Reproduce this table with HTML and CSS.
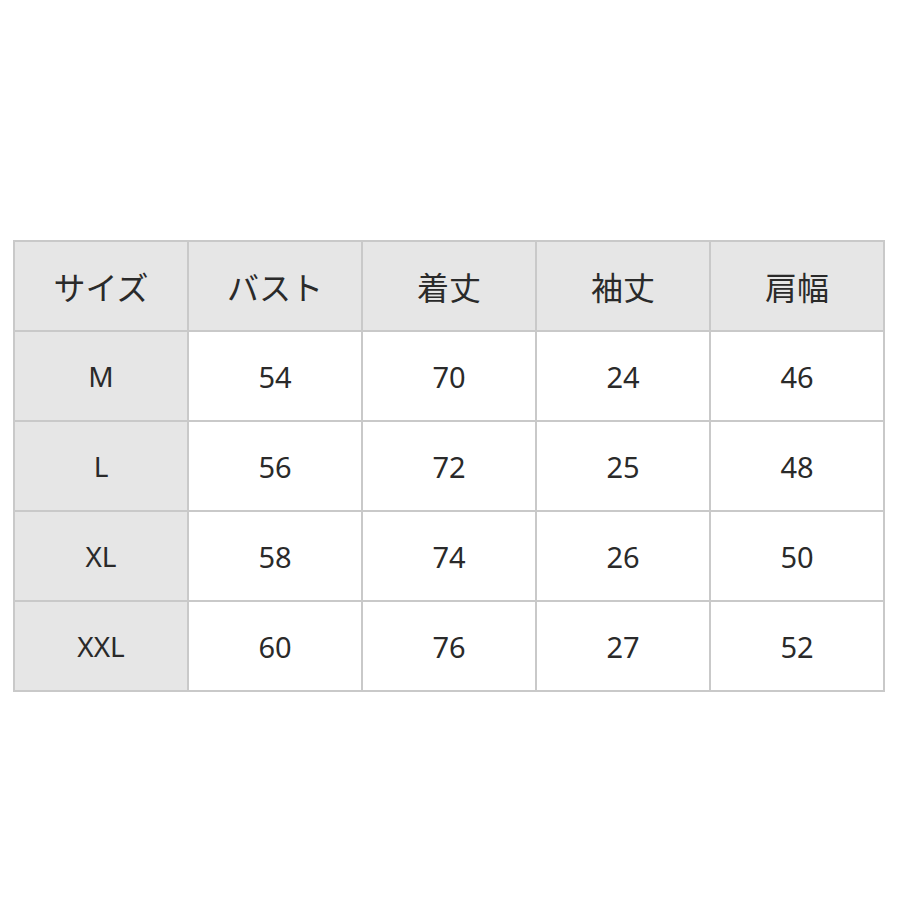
FILE: index.html
```html
<!DOCTYPE html>
<html lang="ja">
<head>
<meta charset="utf-8">
<link rel="stylesheet" href="styles.css">
</head>
<body>
<div class="page">
<table class="size-table">
  <thead>
    <tr><th>サイズ</th><th>バスト</th><th>着丈</th><th>袖丈</th><th>肩幅</th></tr>
  </thead>
  <tbody>
    <tr><th>M</th><td>54</td><td>70</td><td>24</td><td>46</td></tr>
    <tr><th>L</th><td>56</td><td>72</td><td>25</td><td>48</td></tr>
    <tr><th>XL</th><td>58</td><td>74</td><td>26</td><td>50</td></tr>
    <tr><th>XXL</th><td>60</td><td>76</td><td>27</td><td>52</td></tr>
  </tbody>
</table>
</div>
</body>
</html>
```
FILE: styles.css
```css
html, body {
  margin: 0;
  padding: 0;
  background: #ffffff;
}
.page {
  padding: 240px 0 0 13px;
}
.size-table {
  width: 872px;
  height: 450px;
  border-collapse: collapse;
  table-layout: fixed;
  font-family: "Noto Sans", "Noto Sans CJK JP", sans-serif;
  color: #2a2a2a;
}
.size-table th,
.size-table td {
  border: 2px solid #c9c9c9;
  text-align: center;
  vertical-align: middle;
  font-weight: normal;
  padding: 0;
  height: 88px;
}
.size-table thead th {
  background: #e6e6e6;
  font-family: "Noto Sans CJK JP", sans-serif;
  font-size: 32px;
}
.size-table tbody th {
  background: #e6e6e6;
  font-size: 28px;
}
.size-table td {
  background: #ffffff;
  font-size: 29px;
}
```
